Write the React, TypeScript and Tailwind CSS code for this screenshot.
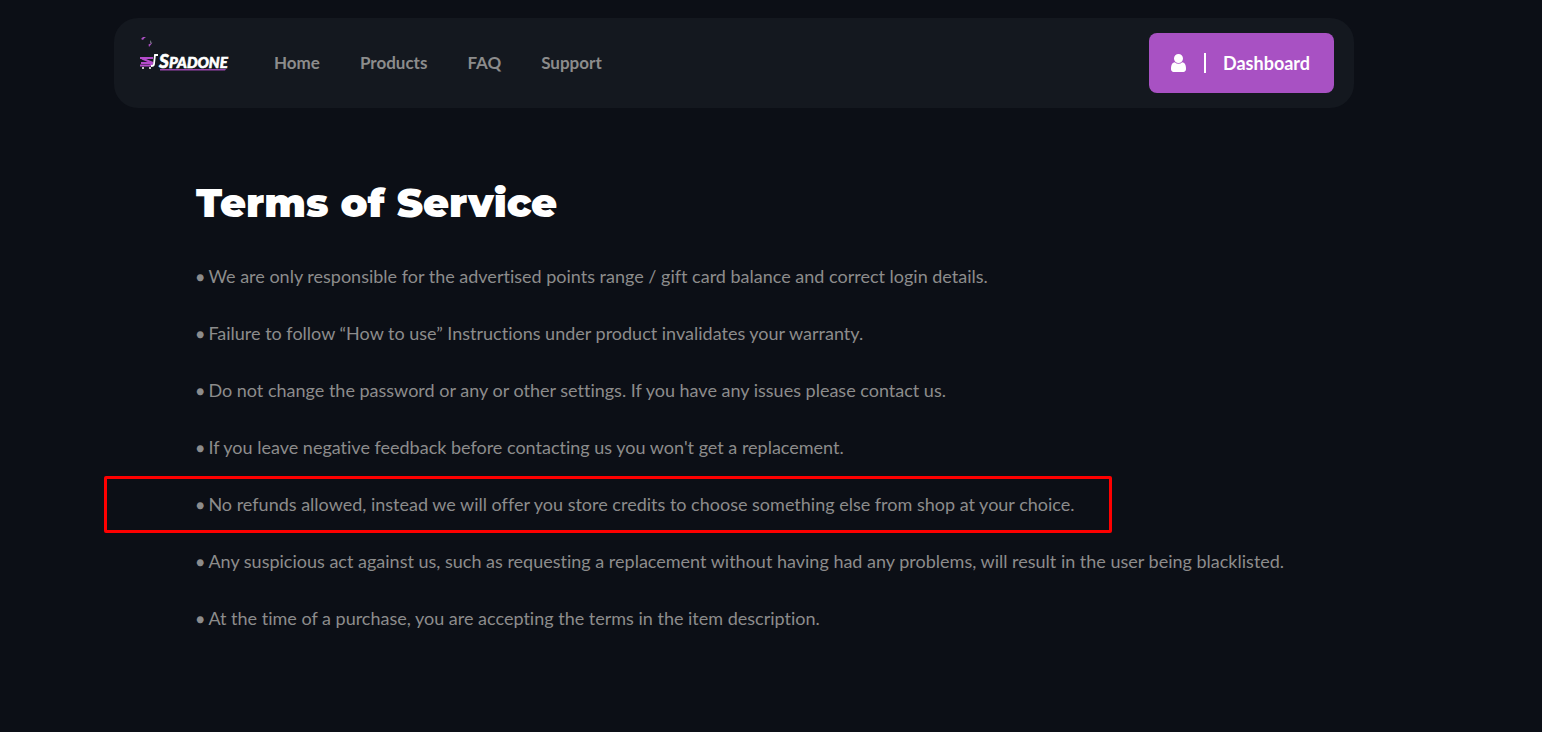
const navLinks = ['Home', 'Products', 'FAQ', 'Support'];

const terms = [
  { text: 'We are only responsible for the advertised points range / gift card balance and correct login details.' },
  { text: 'Failure to follow “How to use” Instructions under product invalidates your warranty.' },
  { text: 'Do not change the password or any or other settings. If you have any issues please contact us.' },
  { text: "If you leave negative feedback before contacting us you won't get a replacement." },
  {
    text: 'No refunds allowed, instead we will offer you store credits to choose something else from shop at your choice.',
    highlighted: true,
  },
  {
    text: 'Any suspicious act against us, such as requesting a replacement without having had any problems, will result in the user being blacklisted.',
  },
  { text: 'At the time of a purchase, you are accepting the terms in the item description.' },
];

function Logo() {
  return (
    <svg width="92" height="36" viewBox="0 0 92 36" role="img" aria-label="Spadone">
      {/* Sparks above the cart */}
      <path d="M3 2l2-2h3l-2 1.5-1 1.5zM10.5 7.5l4-2-1.500 2-2 2.500z" fill="#a94fc0" />
      <path d="M12 3l1.500 2v2l-1.500-1z" fill="#6b6f76" />
      {/* Basket */}
      <path
        d="M2 21h13M4 21.5l11 4.500H3M15 26l-3 2.500H2"
        fill="none"
        stroke="#b44bcb"
        strokeWidth="2"
      />
      <path d="M20 18h-3l-1 9q0 2-3 2" fill="none" stroke="#fff" strokeWidth="1.8" />
      <circle cx="5" cy="31" r="1" fill="#fff" />
      <circle cx="12" cy="31" r="1" fill="#fff" />
      <text
        x="21"
        y="31"
        fill="#fff"
        stroke="#fff"
        strokeWidth="0.6"
        className="font-['Lato',sans-serif] font-black italic"
      >
        <tspan className="text-[19px]">S</tspan>
        <tspan className="text-[15px]">PADONE</tspan>
      </text>
      <path d="M22 32h66l-1 1.500H22z" fill="#9a45ad" />
    </svg>
  );
}

function UserIcon() {
  return (
    <svg width="15" height="18" viewBox="256 128 1280 1536" fill="currentColor" aria-hidden="true">
      <path d="M1536 1399q0 109-62.5 187T1323 1664H469q-88 0-150.5-78T256 1399q0-85 8.5-160.5t31.5-152 58.5-131 94-89T583 832q131 128 313 128t313-128q76 0 134.5 34.5t94 89 58.5 131 31.5 152 8.5 160.5zM1280 512q0 159-112.5 271.5T896 896 624.5 783.5 512 512t112.5-271.5T896 128t271.5 112.5T1280 512z" />
    </svg>
  );
}

function Header() {
  return (
    <header className="flex h-[90px] items-center justify-between rounded-3xl bg-[#14181f] pr-5 pl-6">
      <div className="flex items-center gap-11">
        <a href="#" className="-mt-4">
          <Logo />
        </a>
        <nav className="flex gap-10 text-[17px] font-bold text-[#8c8c8c]">
          {navLinks.map((label) => (
            <a key={label} href="#" className="hover:text-white">
              {label}
            </a>
          ))}
        </nav>
      </div>
      <button
        type="button"
        className="flex h-[60px] min-w-[185px] items-center rounded-lg bg-[#a851c3] px-[22px] text-lg font-bold text-white"
      >
        <UserIcon />
        <span className="ml-[18px] h-5 border-l-2 border-white pl-[17px] leading-5">Dashboard</span>
      </button>
    </header>
  );
}

export default function App() {
  return (
    <div className="min-h-screen bg-[#0c0f16] pt-[18px] pr-[74px] font-['Lato',sans-serif]">
      <div className="mx-auto max-w-[1240px]">
        <Header />
        <main className="px-[82px] pt-[71px] pb-12">
          <h1 className="font-['Montserrat','Inter',sans-serif] text-[40px] leading-[48px] font-black text-white">
            Terms of Service
          </h1>
          <ul className="mt-9 flex flex-col gap-[30px] text-lg leading-[27px] text-[#8c8c8c]">
            {terms.map(({ text, highlighted }) => (
              <li key={text} className="relative flex w-fit gap-1 whitespace-nowrap">
                <span className="text-sm leading-[27px]">●</span>
                <span className="[font-variant-ligatures:none]">{text}</span>
                {highlighted && (
                  <span className="pointer-events-none absolute -inset-y-[15px] -left-[92px] w-[1008px] rounded-xs border-3 border-[#ff0000]" />
                )}
              </li>
            ))}
          </ul>
        </main>
      </div>
    </div>
  );
}
